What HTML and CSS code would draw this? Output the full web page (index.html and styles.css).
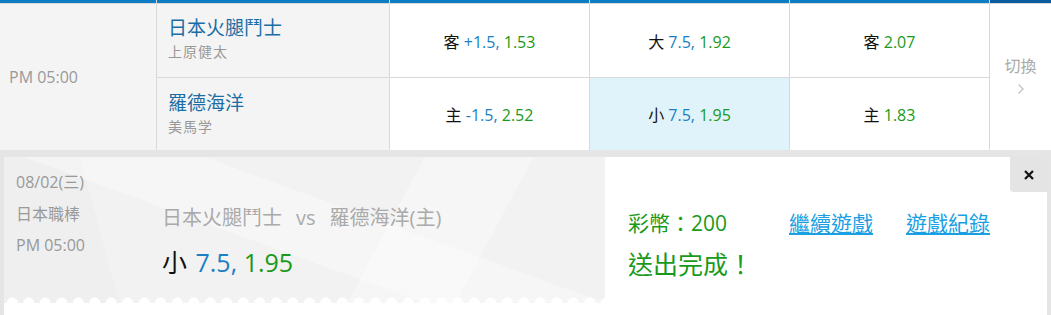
FILE: index.html
```html
<!DOCTYPE html>
<html>
<head>
<meta charset="utf-8">
<title>投注結果</title>
<link rel="stylesheet" href="styles.css">
</head>
<body>
<div class="board">
	<div class="bar"></div><div class="bar"></div><div class="bar"></div><div class="bar"></div><div class="bar"></div><div class="bar dark"></div>

	<div class="cell time">PM 05:00</div>
	<div class="cell team">
		<span class="team-name">日本火腿鬥士</span>
		<span class="pitcher">上原健太</span>
	</div>
	<div class="cell odds"><span>客 <span class="line">+1.5,</span> <span class="rate">1.53</span></span></div>
	<div class="cell odds"><span>大 <span class="line">7.5,</span> <span class="rate">1.92</span></span></div>
	<div class="cell odds"><span>客 <span class="rate">2.07</span></span></div>
	<div class="cell switch">
		<span>切換</span>
		<svg width="8" height="12" viewBox="0 0 8 12"><path d="M1.5 1.5 L6 6 L1.5 10.5" fill="none" stroke="#c4c4c4" stroke-width="1.4"/></svg>
	</div>

	<div class="cell team second">
		<span class="team-name">羅德海洋</span>
		<span class="pitcher">美馬学</span>
	</div>
	<div class="cell odds"><span>主 <span class="line">-1.5,</span> <span class="rate">2.52</span></span></div>
	<div class="cell odds picked"><span>小 <span class="line">7.5,</span> <span class="rate">1.95</span></span></div>
	<div class="cell odds"><span>主 <span class="rate">1.83</span></span></div>
</div>

<div class="panel">
	<div class="ticket">
		<div class="meta">
			<div>08/02(三)</div>
			<div>日本職棒</div>
			<div>PM 05:00</div>
		</div>
		<div class="match">
			<div class="match-title">日本火腿鬥士<span class="vs">vs</span>羅德海洋(主)</div>
			<div class="bet">小 <span class="line">7.5,</span> <span class="rate">1.95</span></div>
		</div>
	</div>
	<div class="result">
		<div class="result-row">
			<span class="coins">彩幣：200</span>
			<a href="#" class="link">繼續遊戲</a>
			<a href="#" class="link">遊戲紀錄</a>
		</div>
		<div class="done">送出完成！</div>
	</div>
	<a href="#" class="close"><svg width="12" height="12" viewBox="0 0 12 12"><path d="M2 2 L10 10 M10 2 L2 10" stroke="#111" stroke-width="2.2"/></svg></a>
</div>
</body>
</html>
```
FILE: styles.css
```css
html, body {
	margin: 0;
	padding: 0;
	background: #e5e5e5;
	font-family: "Open Sans", "Noto Sans CJK TC", sans-serif;
	overflow: hidden;
}

.board {
	display: grid;
	grid-template-columns: 156px 232px 199px 199px 199px 1fr;
	grid-template-rows: 3px 73px 72px;
	gap: 1px;
	background: #d9d9d9;
}

.bar {
	background: #0d7cc2;
}
.bar.dark {
	background: #0b5c9e;
}

.cell {
	background: #fff;
	display: flex;
	align-items: center;
	justify-content: center;
	font-size: 16px;
	color: #111;
}

.time {
	grid-row: 2 / span 2;
	background: #f4f4f4;
	justify-content: flex-start;
	padding-left: 9px;
	color: #999;
	font-size: 16px;
}

.team {
	background: #f4f4f4;
	flex-direction: column;
	align-items: flex-start;
	padding-left: 11px;
	padding-bottom: 4px;
}
.team.second {
	padding-bottom: 0;
}
.team-name {
	color: #1a6ea6;
	font-size: 19px;
	line-height: 26px;
}
.pitcher {
	color: #999;
	font-size: 14px;
	line-height: 22px;
	letter-spacing: 1px;
}

.odds .line {
	color: #1a7fc4;
}
.odds .rate {
	color: #1a9a1a;
}
.picked {
	background: #e0f3fb;
}

.switch {
	grid-row: 2 / span 2;
	grid-column: 6;
	flex-direction: column;
	color: #aaa;
	font-size: 16px;
	gap: 6px;
	padding-bottom: 6px;
}

.panel {
	position: relative;
	margin: 7px 4px 0;
	background: #fff;
	height: 170px;
	display: flex;
}

.ticket {
	position: relative;
	width: 601px;
	height: 146px;
	box-sizing: border-box;
	padding: 10px 0 0 12px;
	display: flex;
	background:
		linear-gradient(118deg, rgba(255,255,255,0) 62%, rgba(255,255,255,.3) 62%, rgba(255,255,255,.3) 78%, rgba(255,255,255,0) 78%),
		linear-gradient(200deg, rgba(255,255,255,0) 40%, rgba(255,255,255,.3) 40%, rgba(255,255,255,.3) 58%, rgba(255,255,255,0) 58%),
		linear-gradient(75deg, rgba(236,236,236,.5) 0, rgba(236,236,236,.5) 18%, rgba(255,255,255,0) 18%),
		#f2f2f2;
}
.ticket::after {
	content: '';
	position: absolute;
	left: 0;
	right: 0;
	bottom: 0;
	height: 7px;
	background: radial-gradient(circle at 50% 100%, #fff 5px, rgba(255,255,255,0) 6px) 0 0 / 16.5px 7px repeat-x;
}

.meta {
	width: 146px;
	color: #999;
	font-size: 16px;
	line-height: 31.5px;
}

.match {
	padding-top: 38px;
}
.match-title {
	color: #aaa;
	font-size: 20px;
	line-height: 26px;
}
.vs {
	margin: 0 14px;
}
.bet {
	margin-top: 14px;
	font-size: 25px;
	line-height: 34px;
	color: #111;
}
.bet .line {
	color: #1a7fc4;
	margin-left: 2px;
}
.bet .rate {
	color: #1a9a1a;
}

.result {
	padding: 53px 0 0 23px;
}
.result-row {
	display: flex;
	align-items: center;
	font-size: 21px;
	line-height: 26px;
}
.coins {
	color: #1a9a1a;
	width: 161px;
}
.link {
	color: #1a9fe3;
	text-decoration: underline;
	margin-right: 33px;
}
.done {
	margin-top: 12px;
	color: #1a9a1a;
	font-size: 25px;
	line-height: 32px;
}

.close {
	position: absolute;
	top: 0;
	right: 0;
	width: 37px;
	height: 35px;
	background: #e4e4e4;
	border-bottom-left-radius: 4px;
	display: flex;
	align-items: center;
	justify-content: center;
}
```
